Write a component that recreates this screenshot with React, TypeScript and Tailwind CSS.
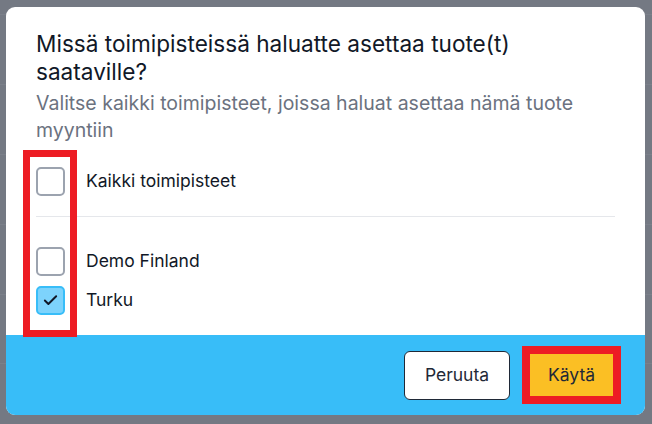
import { Check } from "lucide-react";

interface Location {
  id: string;
  name: string;
  checked: boolean;
}

const locations: Location[] = [
  { id: "demo", name: "Demo Finland", checked: false },
  { id: "turku", name: "Turku", checked: true },
];

function Checkbox({ checked }: { checked: boolean }) {
  return (
    <div
      className={
        checked
          ? "w-[29px] h-[29px] rounded-[5px] border-2 border-[#38bdf8] bg-[#7dd3fc] flex items-center justify-center shrink-0"
          : "w-[29px] h-[29px] rounded-[5px] border-2 border-[#9ca3af] bg-white shrink-0"
      }
    >
      {checked && <Check className="w-[17px] h-[17px] text-[#111827]" strokeWidth={2.75} />}
    </div>
  );
}

export default function App() {
  return (
    <div className="relative w-[652px] h-[424px] overflow-hidden bg-[#747983] font-['Inter',sans-serif]">
      {/* page rows behind the overlay */}
      <div className="absolute inset-0 flex flex-col">
        <div className="h-[15px] border-b border-[#7b808a] shrink-0" />
        <div className="h-[70px] border-b border-[#7b808a] shrink-0" />
        <div className="h-[70px] border-b border-[#7b808a] shrink-0" />
        <div className="h-[70px] border-b border-[#7b808a] shrink-0" />
        <div className="h-[70px] border-b border-[#7b808a] shrink-0" />
        <div className="h-[69px] border-b border-[#7b808a] shrink-0" />
      </div>

      <div className="relative pt-[7px] pl-[6px]">
        <div className="relative w-[639px] h-[408px] rounded-[9px] bg-white overflow-hidden flex flex-col">
          <div className="flex-1 px-[30px] pt-[23px]">
            <h2 className="text-[22.6px] leading-[28px] text-[#111827]">
              Missä toimipisteissä haluatte asettaa tuote(t) saataville?
            </h2>
            <p className="mt-[4px] text-[19.5px] leading-[27px] text-[#6b7280]">
              Valitse kaikki toimipisteet, joissa haluat asettaa nämä tuote myyntiin
            </p>

            <div className="mt-[23px] flex items-center gap-[21px]">
              <Checkbox checked={false} />
              <span className="text-[17.5px] text-[#111827]">Kaikki toimipisteet</span>
            </div>

            <div className="mt-[20px] h-px bg-[#e5e7eb]" />

            <div className="mt-[30px] flex flex-col gap-[10px]">
              {locations.map((loc) => (
                <div key={loc.id} className="flex items-center gap-[21px]">
                  <Checkbox checked={loc.checked} />
                  <span className="text-[17.5px] text-[#111827]">{loc.name}</span>
                </div>
              ))}
            </div>
          </div>

          <div className="h-[80px] shrink-0 bg-[#38bdf8] flex items-center justify-end gap-[12px] pr-[24px]">
            <button className="w-[106px] h-[49px] rounded-[6px] border-[1.5px] border-[#1f2937] bg-white text-[17.5px] text-[#1f2937]">
              Peruuta
            </button>
            <button className="w-[99px] h-[58px] border-[8px] border-[#ed1c24] bg-[#fbbf24] text-[17.5px] text-[#1f2937]">
              Käytä
            </button>
          </div>

          {/* annotation box around the checkboxes */}
          <div className="absolute left-[17px] top-[143px] w-[54px] h-[187px] border-[7px] border-[#ed1c24]" />
        </div>
      </div>
    </div>
  );
}
